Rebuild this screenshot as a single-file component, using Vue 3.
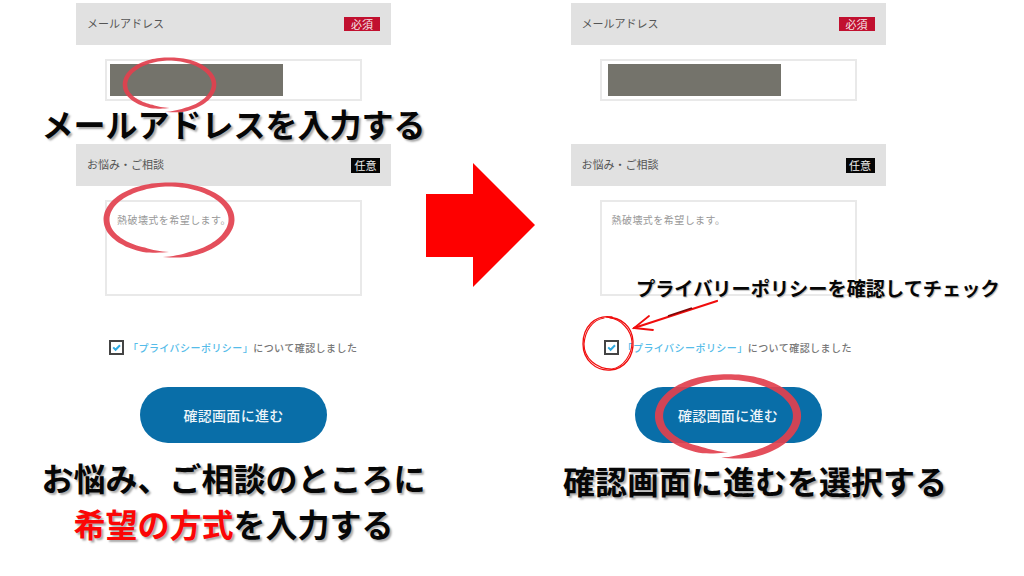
<script setup>
function ring(cx, cy, rx, ry, w, spiral) {
  const n = 120
  const outer = []
  const inner = []
  for (let i = 0; i <= n; i++) {
    const t = i / n
    const a = Math.PI * 0.53 - t * Math.PI * 2.03
    const grow = spiral * (Math.max(0, 0.2 - t) / 0.2 - Math.max(0, t - 0.8) / 0.2)
    const taper = Math.min(1, Math.sin(Math.PI * t) * 5)
    const half = (w / 2) * taper * (0.72 + 0.38 * Math.abs(Math.cos(a)))
    const x = Math.cos(a)
    const y = Math.sin(a)
    outer.push(`${(cx + (rx + grow + half) * x).toFixed(1)} ${(cy + (ry + grow + half) * y).toFixed(1)}`)
    inner.unshift(`${(cx + (rx + grow - half) * x).toFixed(1)} ${(cy + (ry + grow - half) * y).toFixed(1)}`)
  }
  return `M${outer.join('L')}L${inner.join('L')}Z`
}

const rings = [
  ring(169.5, 84.5, 44.5, 25.5, 4.2, 2),
  ring(169, 219.5, 62.5, 35, 5.4, 2.6),
  ring(728, 416, 69, 39, 7.4, 2.8)
]

const columns = [
  { caption: 'メールアドレスを入力する' },
  { caption: '' }
]
</script>

<template>
  <div class="page">
    <section v-for="(col, i) in columns" :key="i" class="column">
      <div class="head">
        <span class="label">メールアドレス</span>
        <span class="badge required">必須</span>
      </div>
      <div class="input">
        <div class="mask"></div>
      </div>
      <div class="between">
        <p v-if="col.caption" class="caption">{{ col.caption }}</p>
      </div>
      <div class="head">
        <span class="label">お悩み・ご相談</span>
        <span class="badge optional">任意</span>
      </div>
      <div class="textarea">熱破壊式を希望します。</div>
      <div class="agree">
        <svg class="box" viewBox="0 0 15 15" width="15" height="15">
          <rect x="1" y="1" width="13" height="13" fill="#fff" stroke="#444" stroke-width="2" />
          <path d="M4.2 7.4 6.6 9.8 11 5.2" fill="none" stroke="#2fa9e0" stroke-width="2" />
        </svg>
        <span class="policy">「プライバシーポリシー」</span>
        <span class="confirm">について確認しました</span>
      </div>
      <button class="next" type="button">確認画面に進む</button>
      <div v-if="i === 0" class="bottom">
        <p class="caption">お悩み、ご相談のところに</p>
        <p class="caption"><em>希望の方式</em>を入力する</p>
      </div>
      <div v-else class="bottom right">
        <p class="caption">確認画面に進むを選択する</p>
      </div>
    </section>

    <svg class="marks" viewBox="0 0 1024 576" width="1024" height="576">
      <polygon points="426,194 473,194 473,163 535,225 473,287 473,257 426,257" fill="#fe0000" />
      <path v-for="(d, i) in rings" :key="i" :d="d" fill="#e2404e" fill-opacity="0.92" />
      <g fill="none" stroke="#f00d0d" stroke-linecap="round">
        <path d="M612 317C595 314 583 327 583 344C583 360 596 371 610 370C625 369 634 356 633 341C632 327 622 317 606 317" stroke-width="1.3" />
        <path d="M604 318C592 320 585 331 584 344C584 358 596 369 612 369C624 367 632 354 632 342C631 329 620 319 610 318" stroke-width="1.1" />
        <path d="M717 301 634 328" stroke-width="2.2" />
        <path d="M649 316 634 328 653 330" stroke-width="1.8" />
      </g>
      <path d="M668 316 692 308" fill="none" stroke="#7a0808" stroke-width="1.8" />
    </svg>

    <p class="note">プライバリーポリシーを確認してチェック</p>
  </div>
</template>

<style>
body {
  margin: 0;
  background: #fff;
}
</style>

<style scoped>
.page {
  position: relative;
  width: 1024px;
  height: 576px;
  overflow: hidden;
  display: flex;
  gap: 179.5px;
  padding: 3px 0 0 76px;
  box-sizing: border-box;
  background: #fff;
  font-family: "Noto Sans CJK JP", "Noto Sans", sans-serif;
}
.column {
  width: 315px;
  flex: none;
  display: flex;
  flex-direction: column;
}
.head {
  height: 42px;
  flex: none;
  display: flex;
  align-items: center;
  justify-content: space-between;
  padding: 0 11px;
  background: #e1e1e1;
  color: #555;
  font-size: 11px;
}
.label {
  margin-top: -2px;
}
.badge {
  display: flex;
  align-items: center;
  justify-content: center;
  height: 14px;
  font-size: 11px;
  color: #f4e4e6;
}
.required {
  width: 36px;
  background: #c1102f;
}
.optional {
  width: 29px;
  height: 15px;
  background: #050505;
  color: #eee;
}
.input {
  height: 42px;
  margin: 14px 29px 0;
  padding: 3px;
  box-sizing: border-box;
  border: 2px solid #e9e9e9;
  background: #fff;
  flex: none;
}
.mask {
  width: 173px;
  height: 100%;
  background: #74736b;
}
.column + .column .mask {
  margin-left: 3px;
}
.between {
  height: 43px;
  flex: none;
  display: flex;
  align-items: center;
  justify-content: center;
}
.textarea {
  height: 96px;
  margin: 14px 29px 0;
  padding: 10px 10px 0;
  box-sizing: border-box;
  flex: none;
  border: 2px solid #e9e9e9;
  background: #fff;
  color: #999;
  font-size: 10px;
  letter-spacing: 0.45px;
  line-height: 16px;
}
.agree {
  height: 16px;
  margin: 43px 0 0 33px;
  display: flex;
  align-items: center;
  font-size: 10px;
  font-weight: 500;
  letter-spacing: 0.45px;
  white-space: nowrap;
}
.box {
  flex: none;
  margin-right: 4px;
}
.policy {
  color: #55bce9;
}
.confirm {
  color: #777;
}
.next {
  width: 187px;
  height: 56px;
  margin: 32px auto 0;
  flex: none;
  border: 0;
  border-radius: 28px;
  background: #096ea8;
  color: #eef5f9;
  font: 500 14px "Noto Sans CJK JP", sans-serif;
  letter-spacing: 0.3px;
}
.bottom {
  margin: 11px -40px 0;
}
.bottom.right {
  margin: 14px -94px 0 -40px;
}
.caption {
  margin: 0;
  font-size: 32px;
  line-height: 46px;
  font-weight: 700;
  color: #060606;
  text-align: center;
  white-space: nowrap;
  text-shadow: 2px 2px 2px #aaa;
}
.between .caption {
  flex: none;
}
.caption em {
  font-style: normal;
  color: #fb0606;
}
.marks {
  position: absolute;
  top: 0;
  left: 0;
  pointer-events: none;
}
.note {
  position: absolute;
  top: 274px;
  left: 636px;
  margin: 0;
  font-size: 19.2px;
  line-height: 28px;
  font-weight: 700;
  color: #060606;
  white-space: nowrap;
  text-shadow: 1px 1px 1px #bbb;
}
</style>
